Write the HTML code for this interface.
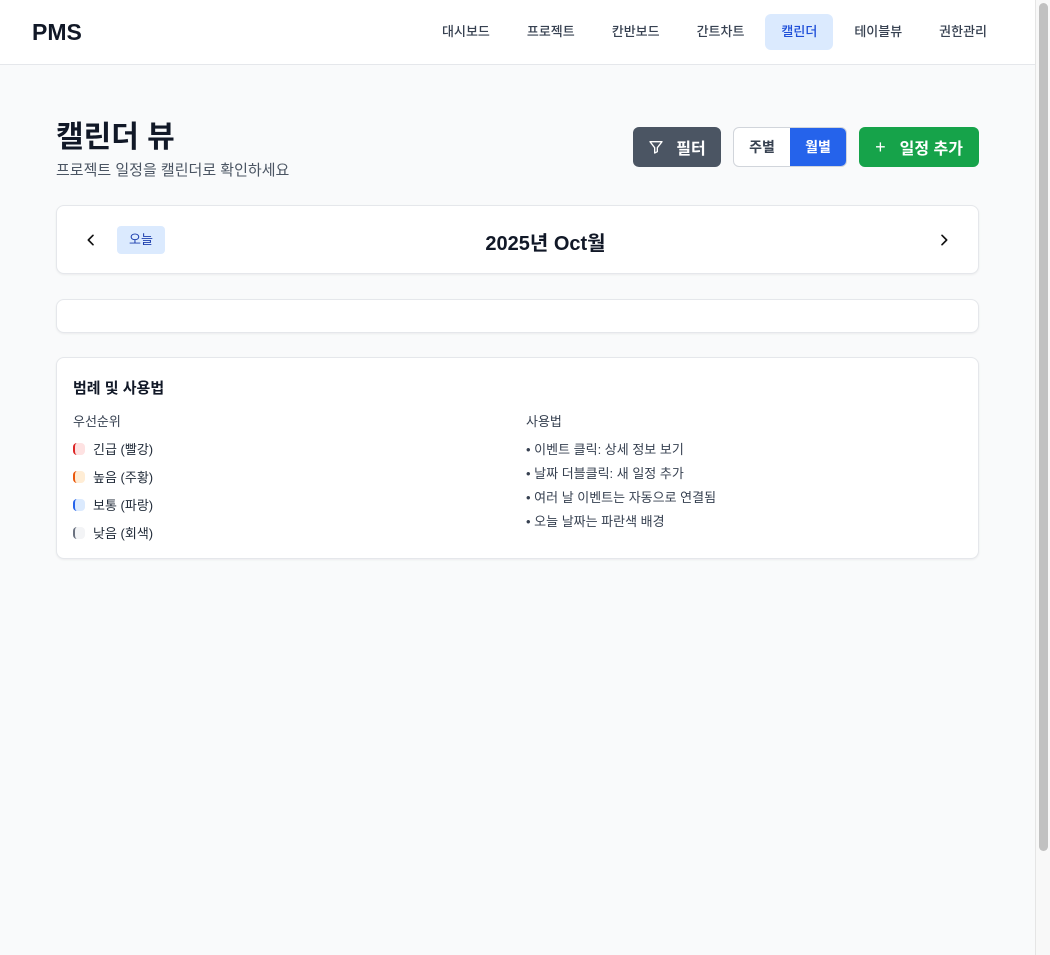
<!DOCTYPE html>
<html><head><meta charset="utf-8">
<style>
*{box-sizing:border-box;margin:0;padding:0}
body{width:1050px;height:955px;overflow:hidden;background:#f9fafb;font-family:"Liberation Sans","Noto Sans CJK KR",sans-serif;color:#111827;position:relative}
.nav{position:absolute;left:0;top:0;width:1035px;height:65px;background:#fff;border-bottom:1px solid #e5e7eb}
.logo{position:absolute;left:32px;top:19px;font-size:23px;font-weight:700;color:#111827}
.menu{position:absolute;right:32px;top:14px;display:flex}
.menu a{display:block;height:36px;line-height:36px;padding:0 16px;font-size:13px;font-weight:500;color:#374151;border-radius:6px;margin-left:5px}
.menu a.on{background:#dbeafe;color:#1d4ed8}
.sb{position:absolute;left:1035px;top:0;width:15px;height:955px;background:#f8f8f8;border-left:1px solid #e5e5e5}
.sb i{position:absolute;left:3px;top:3px;width:9px;height:848px;background:#c1c1c1;border-radius:5px}
h1{position:absolute;left:56px;top:112px;font-size:30px;font-weight:700}
.sub{position:absolute;left:56px;top:159px;font-size:15px;color:#4b5563}
.btn{position:absolute;top:127px;height:40px;border-radius:6px;color:#fff;font-size:16px;font-weight:600;display:flex;align-items:center;justify-content:center}
.card{position:absolute;left:56px;width:923px;background:#fff;border:1px solid #e5e7eb;border-radius:8px;box-shadow:0 1px 2px rgba(0,0,0,.06)}
.lg{font-size:13px;color:#1f2937;position:absolute}
.sw{display:inline-block;width:12px;height:12px;border-radius:4px;border-left:2px solid;vertical-align:-1px;margin-right:8px}
</style></head><body>
<div class="nav"><div class="logo">PMS</div>
<div class="menu"><a>대시보드</a><a>프로젝트</a><a>칸반보드</a><a>간트차트</a><a class="on">캘린더</a><a>테이블뷰</a><a>권한관리</a></div></div>
<div class="sb"><i></i></div>
<h1>캘린더 뷰</h1>
<div class="sub">프로젝트 일정을 캘린더로 확인하세요</div>
<div class="btn" style="left:633px;width:88px;background:#4b5563"><svg width="16" height="16" viewBox="0 0 24 24" fill="none" stroke="#fff" stroke-width="2" stroke-linejoin="round" style="margin-right:12px"><path d="M3 4h18l-7 9v6l-4 2v-8z"/></svg>필터</div>
<div style="position:absolute;left:733px;top:127px;width:114px;height:40px;border:1px solid #d1d5db;border-radius:6px;overflow:hidden;background:#fff;display:flex;font-size:14px;font-weight:600">
<div style="width:56px;line-height:38px;text-align:center;color:#374151">주별</div>
<div style="flex:1;line-height:38px;text-align:center;background:#2563eb;color:#fff">월별</div></div>
<div class="btn" style="left:859px;width:120px;background:#16a34a"><span style="margin-right:14px;font-size:18px;font-weight:400">+</span>일정 추가</div>
<div class="card" style="top:205px;height:69px">
<svg style="position:absolute;left:26px;top:26px" width="16" height="16" viewBox="0 0 24 24" fill="none" stroke="#111" stroke-width="2.5" stroke-linecap="round" stroke-linejoin="round"><path d="M15 5l-7 7 7 7"/></svg>
<div style="position:absolute;left:60px;top:20px;width:48px;height:28px;background:#dbeafe;border-radius:4px;color:#1e40af;font-size:13px;text-align:center;line-height:28px">오늘</div>
<div style="position:absolute;left:56px;right:0;top:21px;text-align:center;font-size:20px;font-weight:700">2025년 Oct월</div>
<svg style="position:absolute;left:879px;top:26px" width="16" height="16" viewBox="0 0 24 24" fill="none" stroke="#111" stroke-width="2.5" stroke-linecap="round" stroke-linejoin="round"><path d="M9 5l7 7-7 7"/></svg>
</div>
<div class="card" style="top:299px;height:34px"></div>
<div class="card" style="top:357px;height:202px">
<div style="position:absolute;left:16px;top:19px;font-size:15px;font-weight:600">범례 및 사용법</div>
<div class="lg" style="left:16px;top:53px;color:#374151">우선순위</div>
<div class="lg" style="left:16px;top:81px"><span class="sw" style="border-color:#dc2626;background:#fee2e2"></span>긴급 (빨강)</div>
<div class="lg" style="left:16px;top:109px"><span class="sw" style="border-color:#ea580c;background:#ffedd5"></span>높음 (주황)</div>
<div class="lg" style="left:16px;top:137px"><span class="sw" style="border-color:#2563eb;background:#dbeafe"></span>보통 (파랑)</div>
<div class="lg" style="left:16px;top:165px"><span class="sw" style="border-color:#6b7280;background:#f3f4f6"></span>낮음 (회색)</div>
<div class="lg" style="left:469px;top:53px;color:#374151">사용법</div>
<div class="lg" style="left:469px;top:81px;color:#374151">• 이벤트 클릭: 상세 정보 보기</div>
<div class="lg" style="left:469px;top:105px;color:#374151">• 날짜 더블클릭: 새 일정 추가</div>
<div class="lg" style="left:469px;top:129px;color:#374151">• 여러 날 이벤트는 자동으로 연결됨</div>
<div class="lg" style="left:469px;top:153px;color:#374151">• 오늘 날짜는 파란색 배경</div>
</div>
</body></html>
